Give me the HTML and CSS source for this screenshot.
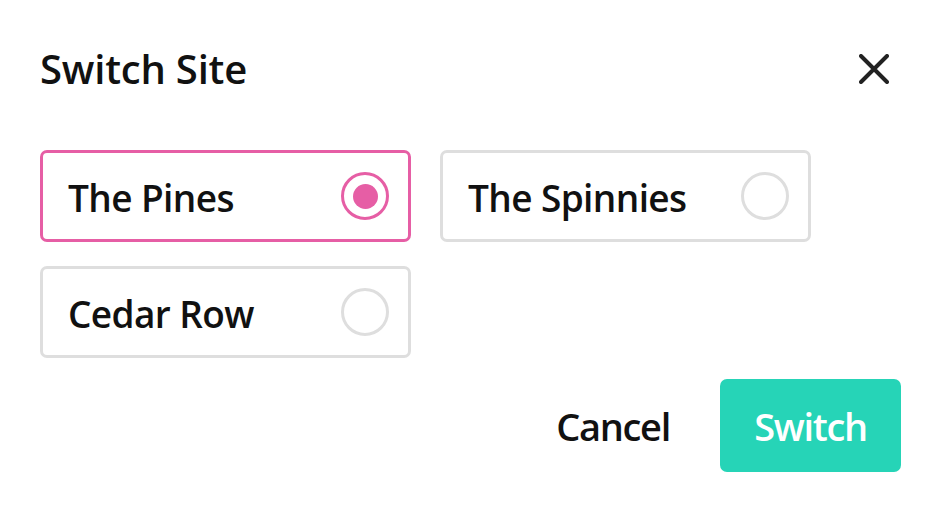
FILE: index.html
```html
<!DOCTYPE html>
<html lang="en">
<head>
    <meta charset="UTF-8">
    <meta name="viewport" content="width=device-width, initial-scale=1.0">
    <title>Switch Site</title>
    <link rel="stylesheet" href="styles.css">
</head>
<body>

    <div class="dialog">
        <div class="dialog-header">
            <h1>Switch Site</h1>
            <button class="close-btn" aria-label="Close">
                <svg width="30" height="30" viewBox="0 0 30 30">
                    <path d="M2 2 L28 28 M28 2 L2 28" stroke="#222" stroke-width="4" stroke-linecap="round" fill="none"/>
                </svg>
            </button>
        </div>

        <div class="site-list">
            <label class="site-option selected">
                <span class="site-name">The Pines</span>
                <span class="radio"></span>
            </label>
            <label class="site-option">
                <span class="site-name">The Spinnies</span>
                <span class="radio"></span>
            </label>
            <label class="site-option">
                <span class="site-name">Cedar Row</span>
                <span class="radio"></span>
            </label>
        </div>

        <div class="dialog-actions">
            <button class="btn-cancel">Cancel</button>
            <button class="btn-switch">Switch</button>
        </div>
    </div>

</body>
</html>
```

FILE: styles.css
```css
body {
    margin: 0;
    font-family: "Open Sans", "Liberation Sans", sans-serif;
    color: #111;
    background: #fff;
}
.dialog {
    padding: 42px 41px 0 40px;
}
.dialog-header {
    display: flex;
    justify-content: space-between;
    align-items: center;
}
.dialog-header h1 {
    margin: 0;
    font-size: 40px;
    font-weight: 600;
    line-height: 54px;
    letter-spacing: -0.2px;
}
.close-btn {
    border: none;
    background: none;
    padding: 0;
    margin-right: 12px;
    width: 30px;
    height: 30px;
    cursor: pointer;
}
.close-btn svg {
    display: block;
}
.site-list {
    display: grid;
    grid-template-columns: 371px 371px;
    column-gap: 29px;
    row-gap: 24px;
    margin-top: 54px;
}
.site-option {
    display: flex;
    justify-content: space-between;
    align-items: center;
    height: 92px;
    box-sizing: border-box;
    padding: 0 19px 0 25px;
    border: 3px solid #dedede;
    border-radius: 7px;
    cursor: pointer;
}
.site-option.selected {
    border-color: #e65ea5;
}
.site-name {
    font-size: 37px;
    font-weight: 600;
    line-height: 52px;
    letter-spacing: -0.6px;
    padding-top: 3px;
}
.radio {
    width: 48px;
    height: 48px;
    box-sizing: border-box;
    border: 3px solid #dedede;
    border-radius: 50%;
    display: flex;
    align-items: center;
    justify-content: center;
}
.selected .radio {
    border-color: #e65ea5;
}
.selected .radio::after {
    content: "";
    width: 25px;
    height: 25px;
    border-radius: 50%;
    background: #e65ea5;
}
.dialog-actions {
    display: flex;
    justify-content: flex-end;
    align-items: center;
    gap: 50px;
    margin-top: 21px;
}
.dialog-actions button {
    font-family: inherit;
    font-size: 38px;
    font-weight: 600;
    line-height: 52px;
    letter-spacing: -1.3px;
    cursor: pointer;
}
.btn-cancel {
    border: none;
    background: none;
    padding: 0;
    color: #111;
}
.btn-switch {
    border: none;
    background-color: #26d4b7;
    color: #fff;
    width: 181px;
    height: 93px;
    border-radius: 7px;
}
```
